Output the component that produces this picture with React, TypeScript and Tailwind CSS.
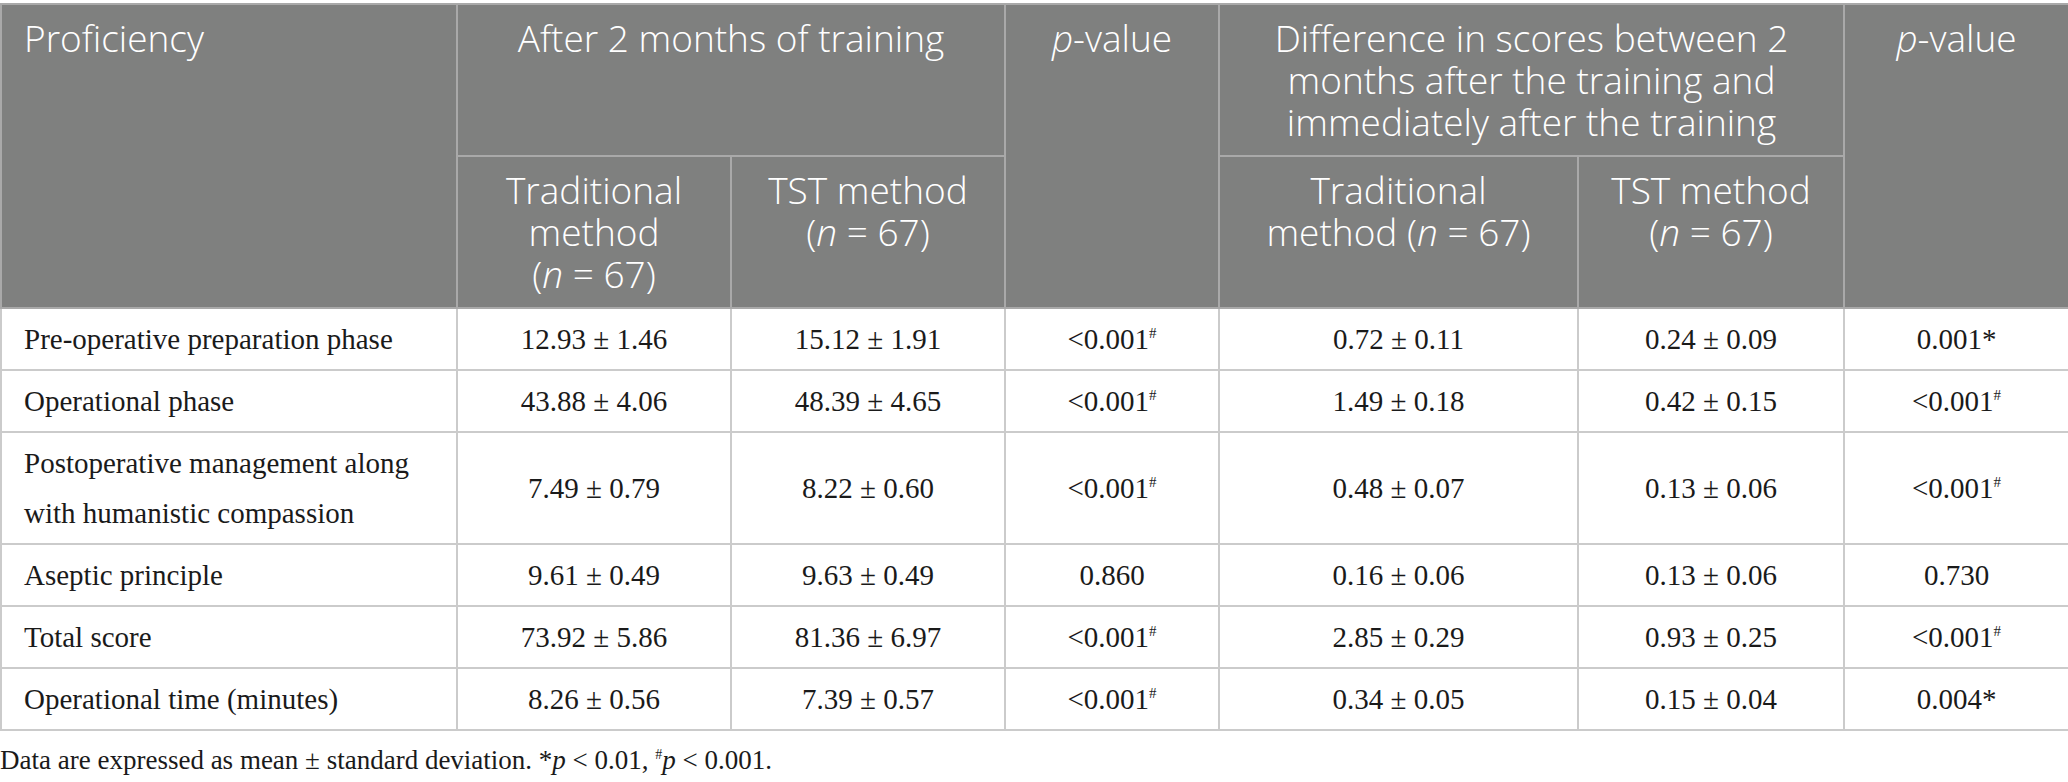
import React from "react";

type Row = {
  label: string;
  trad: string;
  tst: string;
  p1: string;
  p1mark?: "#" | "*";
  dTrad: string;
  dTst: string;
  p2: string;
  p2mark?: "#" | "*";
};

const rows: Row[] = [
  { label: "Pre-operative preparation phase", trad: "12.93 ± 1.46", tst: "15.12 ± 1.91", p1: "<0.001", p1mark: "#", dTrad: "0.72 ± 0.11", dTst: "0.24 ± 0.09", p2: "0.001", p2mark: "*" },
  { label: "Operational phase", trad: "43.88 ± 4.06", tst: "48.39 ± 4.65", p1: "<0.001", p1mark: "#", dTrad: "1.49 ± 0.18", dTst: "0.42 ± 0.15", p2: "<0.001", p2mark: "#" },
  { label: "Postoperative management along with humanistic compassion", trad: "7.49 ± 0.79", tst: "8.22 ± 0.60", p1: "<0.001", p1mark: "#", dTrad: "0.48 ± 0.07", dTst: "0.13 ± 0.06", p2: "<0.001", p2mark: "#" },
  { label: "Aseptic principle", trad: "9.61 ± 0.49", tst: "9.63 ± 0.49", p1: "0.860", dTrad: "0.16 ± 0.06", dTst: "0.13 ± 0.06", p2: "0.730" },
  { label: "Total score", trad: "73.92 ± 5.86", tst: "81.36 ± 6.97", p1: "<0.001", p1mark: "#", dTrad: "2.85 ± 0.29", dTst: "0.93 ± 0.25", p2: "<0.001", p2mark: "#" },
  { label: "Operational time (minutes)", trad: "8.26 ± 0.56", tst: "7.39 ± 0.57", p1: "<0.001", p1mark: "#", dTrad: "0.34 ± 0.05", dTst: "0.15 ± 0.04", p2: "0.004", p2mark: "*" },
];

function PValue({ value, mark }: { value: string; mark?: "#" | "*" }) {
  return (
    <>
      {value}
      {mark === "#" && (
        <sup className="relative -top-[11px] align-baseline text-[15px] leading-none">#</sup>
      )}
      {mark === "*" && <span>*</span>}
    </>
  );
}

const th =
  "border-2 border-[#a9a9a9] px-[22px] pt-[12px] pb-[12px] align-top font-light text-white";
const td =
  "border-2 border-[#cbcbcb] px-[22px] py-[5px] align-middle text-center";

export default function App() {
  return (
    <div className="w-[2068px] bg-white pt-[3px] text-[#1a1a1a]">
      <table className="w-full table-fixed border-collapse">
        <colgroup>
          <col className="w-[456px]" />
          <col className="w-[274px]" />
          <col className="w-[274px]" />
          <col className="w-[214px]" />
          <col className="w-[359px]" />
          <col className="w-[266px]" />
          <col className="w-[225px]" />
        </colgroup>
        <thead className="bg-[#7f807f] font-['Open_Sans',sans-serif] text-[37px] leading-[42px]">
          <tr>
            <th rowSpan={2} className={`${th} text-left`}>
              Proficiency
            </th>
            <th colSpan={2} className={`${th} text-center`}>
              After 2 months of training
            </th>
            <th rowSpan={2} className={`${th} text-center`}>
              <i>p</i>-value
            </th>
            <th colSpan={2} className={`${th} text-center`}>
              Difference in scores between 2<br />
              months after the training and<br />
              immediately after the training
            </th>
            <th rowSpan={2} className={`${th} text-center`}>
              <i>p</i>-value
            </th>
          </tr>
          <tr>
            <th className={`${th} text-center`}>
              Traditional
              <br />
              method
              <br />
              (<i>n</i> = 67)
            </th>
            <th className={`${th} text-center`}>
              TST method
              <br />
              (<i>n</i> = 67)
            </th>
            <th className={`${th} text-center`}>
              Traditional
              <br />
              method (<i>n</i> = 67)
            </th>
            <th className={`${th} text-center`}>
              TST method
              <br />
              (<i>n</i> = 67)
            </th>
          </tr>
        </thead>
        <tbody className="font-['Liberation_Serif',serif] text-[29px] leading-[50px]">
          {rows.map((r) => (
            <tr key={r.label}>
              <td className={`${td} !text-left`}>{r.label}</td>
              <td className={td}>{r.trad}</td>
              <td className={td}>{r.tst}</td>
              <td className={td}>
                <PValue value={r.p1} mark={r.p1mark} />
              </td>
              <td className={td}>{r.dTrad}</td>
              <td className={td}>{r.dTst}</td>
              <td className={td}>
                <PValue value={r.p2} mark={r.p2mark} />
              </td>
            </tr>
          ))}
        </tbody>
      </table>
      <p className="mt-[11px] font-['Liberation_Serif',serif] text-[27px] leading-[36px]">
        Data are expressed as mean ± standard deviation. *<i>p</i> &lt; 0.01,{" "}
        <sup className="relative -top-[10px] align-baseline text-[14px] leading-none">#</sup>
        <i>p</i> &lt; 0.001.
      </p>
    </div>
  );
}
